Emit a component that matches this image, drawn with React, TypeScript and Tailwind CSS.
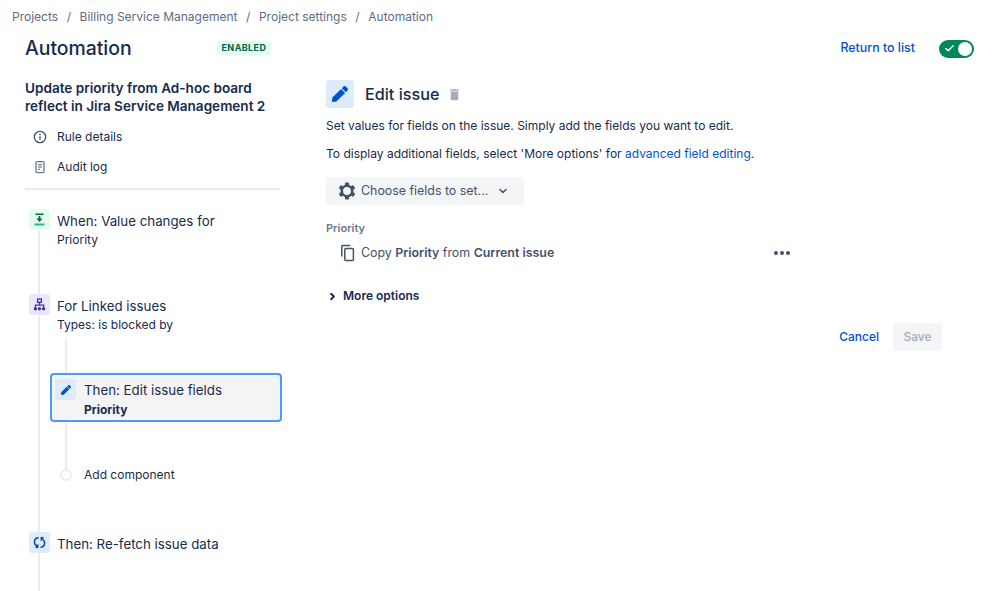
import { ChevronDown, ChevronRight, Check } from 'lucide-react'
import { MdDelete } from 'react-icons/md'
import { FaPen } from 'react-icons/fa'

function Breadcrumbs() {
  const items = ['Projects', 'Billing Service Management', 'Project settings', 'Automation']
  return (
    <div className="flex items-center h-[33px] pl-[12px] text-[12px] text-[#5e6c84]">
      {items.map((item, i) => (
        <span key={item} className="flex items-center">
          {i > 0 && <span className="w-[21.5px] text-center">/</span>}
          {item}
        </span>
      ))}
    </div>
  )
}

function InfoIcon() {
  return (
    <svg width="14" height="14" viewBox="0 0 14 14" fill="none" className="mr-[10px] text-[#42526e]">
      <circle cx="7" cy="7" r="5.7" stroke="currentColor" strokeWidth="1.3" />
      <rect x="6.3" y="6.2" width="1.4" height="3.6" rx="0.5" fill="currentColor" />
      <circle cx="7" cy="4.5" r="0.85" fill="currentColor" />
    </svg>
  )
}

function LogIcon() {
  return (
    <svg width="14" height="14" viewBox="0 0 14 14" fill="none" className="mr-[10px] text-[#6b778c]">
      <rect x="3" y="1.6" width="8" height="11" rx="1" stroke="currentColor" strokeWidth="1.3" />
      <rect x="5" y="4" width="4" height="1.2" fill="currentColor" />
      <rect x="5" y="6.4" width="4" height="1.2" fill="currentColor" />
      <rect x="5" y="8.8" width="2" height="1.2" fill="currentColor" />
    </svg>
  )
}

function ValueChangeIcon() {
  return (
    <svg width="13" height="13" viewBox="0 0 13 13" fill="none">
      <rect x="2.5" y="0.5" width="8" height="1.5" fill="#006644" />
      <rect x="1.5" y="10.5" width="10" height="2" fill="#36b37e" />
      <rect x="5.7" y="3" width="1.6" height="3" fill="#006644" />
      <path d="M3.5 5.5h6L6.5 9z" fill="#006644" />
    </svg>
  )
}

function BranchIcon() {
  return (
    <svg width="13" height="13" viewBox="0 0 13 13" fill="none" stroke="#403294">
      <rect x="4.6" y="1" width="3.8" height="3.4" strokeWidth="1.3" />
      <path d="M6.5 4.4v3M2.4 9V7.2h8.2V9" strokeWidth="1.2" />
      <circle cx="2.4" cy="10.7" r="1.7" fill="#403294" strokeWidth="0" />
      <circle cx="6.5" cy="10.7" r="1.7" fill="#403294" strokeWidth="0" />
      <circle cx="10.6" cy="10.7" r="1.7" fill="#403294" strokeWidth="0" />
    </svg>
  )
}

function RefetchIcon() {
  return (
    <svg width="13" height="13" viewBox="0 0 13 13" fill="none" stroke="#0747a6" strokeWidth="1.5">
      <path d="M5.6 1.8C3.2 1.8 1.4 3.4 1.4 5.9c0 1.8.9 3.2 2.4 4" />
      <path d="M7.4 11.2c2.4 0 4.2-1.6 4.2-4.1 0-1.8-.9-3.2-2.4-4" />
      <path d="M5.4 7.4V12.2L1.8 11.4z" fill="#0747a6" stroke="none" />
      <path d="M7.6 5.6V.8L11.2 1.6z" fill="#0747a6" stroke="none" />
    </svg>
  )
}

function GearIcon() {
  return (
    <svg width="18" height="18" viewBox="0 0 18 18" fill="none" className="mr-[5px]">
      <circle cx="9" cy="9" r="5.2" stroke="#42526e" strokeWidth="2.6" />
      {[0, 60, 120, 180, 240, 300].map(a => (
        <rect key={a} x="7" y="0.6" width="4" height="3.4" rx="0.6" fill="#42526e" transform={`rotate(${a} 9 9)`} />
      ))}
    </svg>
  )
}

function CopyIcon() {
  return (
    <svg width="18" height="18" viewBox="0 0 18 18" fill="none" stroke="#42526e" strokeWidth="1.5" className="ml-[13px] mr-[4px]">
      <path d="M2.8 12.5V2.6a1 1 0 0 1 1-1h7.4" />
      <rect x="5.8" y="4.4" width="8.6" height="12" rx="1" />
    </svg>
  )
}

function RuleStep({ title, sub, bg, icon, h }: { title: string; sub?: string; bg: string; icon: React.ReactNode; h: string }) {
  return (
    <div className={`flex ${h}`}>
      <div className={`w-[21px] h-[21px] rounded-[3px] flex items-center justify-center shrink-0 relative z-10 ${bg}`}>{icon}</div>
      <div className="ml-[7px]">
        <div className="text-[13.3px] leading-[24px] text-[#172b4d] whitespace-nowrap">{title}</div>
        {sub && <div className="text-[12px] leading-[14px] text-[#172b4d]">{sub}</div>}
      </div>
    </div>
  )
}

function Sidebar() {
  return (
    <div className="w-[256px] shrink-0">
      <div className="text-[13.55px] leading-[18px] font-semibold text-[#172b4d] whitespace-nowrap">
        Update priority from Ad-hoc board
        <br />
        reflect in Jira Service Management 2
      </div>
      <div className="mt-[7px] flex items-center h-[30px] pl-[8px] text-[12px] text-[#172b4d]">
        <InfoIcon />
        Rule details
      </div>
      <div className="flex items-center h-[30px] pl-[8px] text-[12px] text-[#172b4d]">
        <LogIcon />
        Audit log
      </div>
      <div className="mt-[6px] h-[2px] w-[255px] bg-[#ebecf0]" />

      <div className="relative mt-[19px] pl-[4px]">
        <div className="absolute left-[13px] top-[20px] bottom-0 w-[2px] bg-[#ebecf0]" />
        <RuleStep
          title="When: Value changes for"
          sub="Priority"
          bg="bg-[#e3fcef]"
          h="h-[85px]"
          icon={<ValueChangeIcon />}
        />
        <RuleStep
          title="For Linked issues"
          sub="Types: is blocked by"
          bg="bg-[#eae6ff]"
          h="h-[79px]"
          icon={<BranchIcon />}
        />

        <div className="relative pl-[25px]">
          <div className="absolute left-[36px] -top-[35px] h-[136px] w-[2px] bg-[#ebecf0]" />
          <div className="relative w-[232px] h-[49px] ml-[-4px] -mr-[4px] rounded-[4px] border-2 border-[#4c9aff] bg-[#f4f4f4] flex pl-[3px] pt-[4px]">
            <div className="w-[21px] h-[21px] rounded-[3px] bg-[#deebff] flex items-center justify-center shrink-0">
              <FaPen size={10} className="text-[#0052cc]" />
            </div>
            <div className="ml-[8px]">
              <div className="text-[13.3px] leading-[24px] -mt-[1px] text-[#172b4d] whitespace-nowrap">Then: Edit issue fields</div>
              <div className="mt-[1px] text-[12px] leading-[14px] font-bold text-[#172b4d]">Priority</div>
            </div>
          </div>
          <div className="flex items-center h-[18px] mt-[44px] relative">
            <div className="w-[12px] h-[12px] rounded-full border-2 border-[#ebecf0] bg-white ml-[6px]" />
            <div className="ml-[12px] text-[12px] text-[#172b4d]">Add component</div>
          </div>
        </div>

        <div className="mt-[48px] h-[59px]">
          <RuleStep
            title="Then: Re-fetch issue data"
            bg="bg-[#deebff]"
            h="h-[21px]"
            icon={<RefetchIcon />}
          />
        </div>
      </div>
    </div>
  )
}

function EditorPanel() {
  return (
    <div className="ml-[45px] w-[617px]">
      <div className="flex items-center h-[28px] mt-[1px]">
        <div className="w-[28px] h-[28px] rounded-[3px] bg-[#deebff] flex items-center justify-center">
          <FaPen size={16} className="text-[#0052cc]" />
        </div>
        <div className="ml-[11px] text-[16.2px] font-medium text-[#172b4d]">Edit issue</div>
        <MdDelete size={15} className="ml-[8px] text-[#a5adba]" />
      </div>
      <div className="mt-[9px] text-[12px] leading-[18px] text-[#172b4d]">
        Set values for fields on the issue. Simply add the fields you want to edit.
      </div>
      <div className="mt-[10px] text-[12px] leading-[18px] text-[#172b4d]">
        To display additional fields, select 'More options' for{' '}
        <span className="text-[#0052cc]">advanced field editing</span>.
      </div>
      <div className="mt-[14px] w-[198px] h-[28px] rounded-[3px] bg-[#f4f5f7] flex items-center pl-[12px] text-[12.4px] text-[#42526e] whitespace-nowrap">
        <GearIcon />
        Choose fields to set...
        <ChevronDown size={12} strokeWidth={3} className="ml-[9px]" />
      </div>
      <div className="mt-[16px] text-[11px] leading-[14px] font-semibold text-[#6b778c]">Priority</div>
      <div className="mt-[9px] flex items-center h-[18px] w-[464px] text-[12.4px] text-[#42526e]">
        <CopyIcon />
        <span className="whitespace-nowrap">
          Copy <b className="font-semibold">Priority</b> from <b className="font-semibold">Current issue</b>
        </span>
        <span className="ml-auto flex gap-[2px]">
          <span className="w-[4px] h-[4px] rounded-full bg-[#42526e]" />
          <span className="w-[4px] h-[4px] rounded-full bg-[#42526e]" />
          <span className="w-[4px] h-[4px] rounded-full bg-[#42526e]" />
        </span>
      </div>
      <div className="mt-[25px] flex items-center h-[18px] text-[12px] font-semibold text-[#172b4d]">
        <ChevronRight size={11} strokeWidth={4} className="mr-[5px] ml-[1px]" />
        More options
      </div>
      <div className="mt-[18px] flex items-center justify-end w-[616px] text-[12px] font-medium">
        <span className="text-[#0052cc] mr-[14px]">Cancel</span>
        <span className="w-[49px] h-[28px] rounded-[3px] bg-[#f4f5f7] text-[#a5adba] flex items-center justify-center">Save</span>
      </div>
    </div>
  )
}

export default function App() {
  return (
    <div className="w-[999px] h-[591px] overflow-hidden bg-white font-['Inter',sans-serif]">
      <Breadcrumbs />
      <div className="flex items-center h-[31px] pl-[25px] pr-[25px]">
        <div className="w-[192px] text-[19.4px] font-medium text-[#172b4d]">Automation</div>
        <div className="h-[14px] px-[4.5px] -mt-[1px] rounded-[3px] bg-[#e3fcef] text-[#006644] text-[9px] font-bold tracking-[0.4px] flex items-center">ENABLED</div>
        <div className="ml-auto text-[12.4px] font-medium text-[#0052cc]">Return to list</div>
        <div className="ml-[24px] w-[35px] h-[18px] rounded-full bg-[#00875a] flex items-center justify-between pl-[5px] pr-[2px]">
          <Check size={11} strokeWidth={3} className="text-white" />
          <div className="w-[14px] h-[14px] rounded-full bg-white" />
        </div>
      </div>
      <div className="flex pl-[25px] mt-[15px]">
        <Sidebar />
        <EditorPanel />
      </div>
    </div>
  )
}
